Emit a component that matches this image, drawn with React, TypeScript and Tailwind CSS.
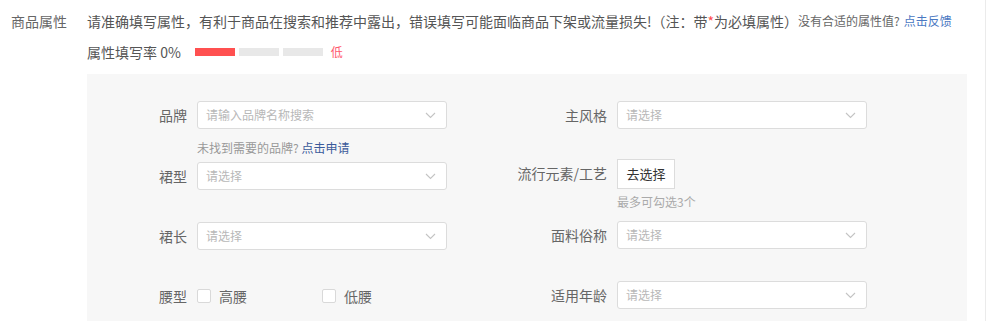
import React from "react";

const FONT = "font-['Noto_Sans_CJK_SC','Noto_Sans',sans-serif]";

function Chevron() {
  return (
    <svg width="11" height="7" viewBox="0 0 11 7" className="shrink-0">
      <polyline points="1,1 5.5,5.5 10,1" fill="none" stroke="#c4c4c4" strokeWidth="1.1" />
    </svg>
  );
}

function Select({ placeholder = "请选择" }: { placeholder?: string }) {
  return (
    <div className="flex h-[28px] w-[250px] items-center justify-between rounded-[3px] border border-[#dcdcdc] bg-white pl-[8px] pr-[10px]">
      <span className="text-[12px] leading-none text-[#b8b8b8]">{placeholder}</span>
      <Chevron />
    </div>
  );
}

function Label({ children }: { children: React.ReactNode }) {
  return (
    <div className="w-[100px] shrink-0 text-right text-[14px] leading-[28px] text-[#666] whitespace-nowrap">
      {children}
    </div>
  );
}

function Field({ label, children, className = "" }: { label: string; children: React.ReactNode; className?: string }) {
  return (
    <div className={`flex items-start gap-[10px] ${className}`}>
      <Label>{label}</Label>
      <div className="flex flex-col items-start">{children}</div>
    </div>
  );
}

function Checkbox({ label }: { label: string }) {
  return (
    <div className="flex w-[125px] items-center gap-[8px]">
      <span className="h-[14px] w-[14px] rounded-[2px] border border-[#d9d9d9] bg-white" />
      <span className="text-[14px] leading-none text-[#666]">{label}</span>
    </div>
  );
}

export default function App() {
  return (
    <div className={`h-[321px] w-[986px] overflow-hidden border-r border-[#ebebeb] bg-white ${FONT}`}>
      <div className="flex pt-[11px]">
        <div className="w-[87px] shrink-0 pl-[11px] text-[14px] leading-5 text-[#666]">商品属性</div>
        <div className="flex flex-col">
          {/* tips */}
          <div className="flex h-5 items-center whitespace-nowrap">
            <span className="text-[14px] leading-5 text-[#555]">
              请准确填写属性，有利于商品在搜索和推荐中露出，错误填写可能面临商品下架或流量损失!（注：带
              <span className="text-[#ff4d4f]">*</span>为必填属性）
            </span>
            <span className="text-[12px] leading-5 text-[#666]">没有合适的属性值? </span>
            <span className="ml-[4px] text-[12px] leading-5 text-[#4a78c2]">点击反馈</span>
          </div>

          {/* fill rate */}
          <div className="mt-[11px] flex h-5 items-center">
            <span className="text-[14px] leading-5 text-[#555]">属性填写率 0%</span>
            <div className="ml-[14px] flex gap-[4px]">
              <span className="h-[8px] w-[40px] bg-[#ff5050]" />
              <span className="h-[8px] w-[40px] bg-[#e8e8e8]" />
              <span className="h-[8px] w-[40px] bg-[#e8e8e8]" />
            </div>
            <span className="ml-[8px] text-[12px] leading-5 text-[#ff5a6e]">低</span>
          </div>

          {/* attribute panel */}
          <div className="mt-[12px] h-[300px] w-[880px] bg-[#f7f7f7] pt-[27px]">
            <div className="grid h-[58px] grid-cols-[420px_1fr]">
              <Field label="品牌">
                <Select placeholder="请输入品牌名称搜索" />
                <div className="mt-[11px] text-[12px] leading-4 text-[#999]">
                  未找到需要的品牌? <span className="text-[#3a5a9a]">点击申请</span>
                </div>
              </Field>
              <Field label="主风格">
                <Select />
              </Field>
            </div>

            <div className="grid h-[62px] grid-cols-[420px_1fr]">
              <Field label="裙型" className="mt-[3px]">
                <Select />
              </Field>
              <Field label="流行元素/工艺">
                <div className="flex h-[30px] w-[58px] items-center justify-center border border-[#dcdcdc] bg-white text-[13px] text-[#333]">
                  去选择
                </div>
                <div className="mt-[5px] text-[12px] leading-4 text-[#aaa]">最多可勾选3个</div>
              </Field>
            </div>

            <div className="grid h-[60px] grid-cols-[420px_1fr]">
              <Field label="裙长" className="mt-[1px]">
                <Select />
              </Field>
              <Field label="面料俗称">
                <Select />
              </Field>
            </div>

            <div className="grid grid-cols-[420px_1fr]">
              <div className="mt-[1px] flex items-center gap-[10px]">
                <Label>腰型</Label>
                <div className="flex h-[28px] items-center">
                  <Checkbox label="高腰" />
                  <Checkbox label="低腰" />
                </div>
              </div>
              <Field label="适用年龄">
                <Select />
              </Field>
            </div>
          </div>
        </div>
      </div>
    </div>
  );
}
